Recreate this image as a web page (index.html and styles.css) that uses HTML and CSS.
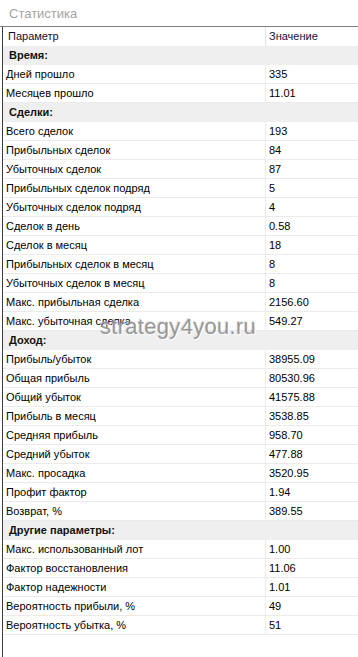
FILE: index.html
```html
<!DOCTYPE html>
<html lang="ru">
<head>
<meta charset="utf-8">
<title>Статистика</title>
<link rel="stylesheet" href="styles.css">
</head>
<body>
<div class="window">
  <div class="title">Статистика</div>
  <div class="table">
    <div class="row head"><div class="c1">Параметр</div><div class="c2">Значение</div></div>
    <div class="row group"><div class="g">Время:</div></div>
    <div class="row"><div class="c1">Дней прошло</div><div class="c2">335</div></div>
    <div class="row"><div class="c1">Месяцев прошло</div><div class="c2">11.01</div></div>
    <div class="row group"><div class="g">Сделки:</div></div>
    <div class="row"><div class="c1">Всего сделок</div><div class="c2">193</div></div>
    <div class="row"><div class="c1">Прибыльных сделок</div><div class="c2">84</div></div>
    <div class="row"><div class="c1">Убыточных сделок</div><div class="c2">87</div></div>
    <div class="row"><div class="c1">Прибыльных сделок подряд</div><div class="c2">5</div></div>
    <div class="row"><div class="c1">Убыточных сделок подряд</div><div class="c2">4</div></div>
    <div class="row"><div class="c1">Сделок в день</div><div class="c2">0.58</div></div>
    <div class="row"><div class="c1">Сделок в месяц</div><div class="c2">18</div></div>
    <div class="row"><div class="c1">Прибыльных сделок в месяц</div><div class="c2">8</div></div>
    <div class="row"><div class="c1">Убыточных сделок в месяц</div><div class="c2">8</div></div>
    <div class="row"><div class="c1">Макс. прибыльная сделка</div><div class="c2">2156.60</div></div>
    <div class="row"><div class="c1">Макс. убыточная сделка</div><div class="c2">549.27</div></div>
    <div class="row group"><div class="g">Доход:</div></div>
    <div class="row"><div class="c1">Прибыль/убыток</div><div class="c2">38955.09</div></div>
    <div class="row"><div class="c1">Общая прибыль</div><div class="c2">80530.96</div></div>
    <div class="row"><div class="c1">Общий убыток</div><div class="c2">41575.88</div></div>
    <div class="row"><div class="c1">Прибыль в месяц</div><div class="c2">3538.85</div></div>
    <div class="row"><div class="c1">Средняя прибыль</div><div class="c2">958.70</div></div>
    <div class="row"><div class="c1">Средний убыток</div><div class="c2">477.88</div></div>
    <div class="row"><div class="c1">Макс. просадка</div><div class="c2">3520.95</div></div>
    <div class="row"><div class="c1">Профит фактор</div><div class="c2">1.94</div></div>
    <div class="row"><div class="c1">Возврат, %</div><div class="c2">389.55</div></div>
    <div class="row group"><div class="g">Другие параметры:</div></div>
    <div class="row"><div class="c1">Макс. использованный лот</div><div class="c2">1.00</div></div>
    <div class="row"><div class="c1">Фактор восстановления</div><div class="c2">11.06</div></div>
    <div class="row"><div class="c1">Фактор надежности</div><div class="c2">1.01</div></div>
    <div class="row"><div class="c1">Вероятность прибыли, %</div><div class="c2">49</div></div>
    <div class="row"><div class="c1">Вероятность убытка, %</div><div class="c2">51</div></div>
  </div>
  <div class="watermark">strategy4you.ru</div>
</div>
</body>
</html>
```

FILE: styles.css
```css
html, body {
  margin: 0;
  padding: 0;
  background: #ffffff;
}
body {
  font-family: "Liberation Sans", Arial, sans-serif;
  font-size: 11px;
  color: #000;
}
.window {
  position: relative;
  width: 358px;
  height: 657px;
  overflow: hidden;
  display: flex;
  flex-direction: column;
}
.title {
  height: 27px;
  flex: none;
  box-sizing: border-box;
  padding: 6px 0 0 9px;
  font-size: 13px;
  color: #a3a3a3;
  border-bottom: 1px solid #808080;
  line-height: 15px;
}
.table {
  flex: 1;
  margin-left: 2px;
  border-left: 1px solid #3c3c3c;
}
.row {
  display: flex;
  height: 19px;
  box-sizing: border-box;
  border-bottom: 1px solid #ebebeb;
  line-height: 18px;
}
.row.head {
  border-bottom: none;
  color: #10103a;
}
.row.head .c1 { padding-left: 5px; }
.row.head .c2 { border-left: 1px solid #e3e3e3; }
.row.group {
  background: #efefef;
  border-bottom: none;
}
.g {
  padding-left: 6px;
  font-weight: bold;
  color: #111;
}
.c1 {
  width: 262px;
  flex: none;
  padding-left: 3px;
  box-sizing: border-box;
  white-space: nowrap;
}
.c2 {
  flex: 1;
  padding-left: 3px;
  border-left: 1px solid #ececec;
}
.watermark {
  position: absolute;
  left: 100px;
  top: 314px;
  font-size: 22px;
  color: rgba(120, 120, 120, 0.75);
  text-shadow: 1px 1px 0 rgba(255, 255, 255, 0.9), -1px -1px 0 rgba(200, 200, 200, 0.5);
  letter-spacing: 0.3px;
  pointer-events: none;
}
```
